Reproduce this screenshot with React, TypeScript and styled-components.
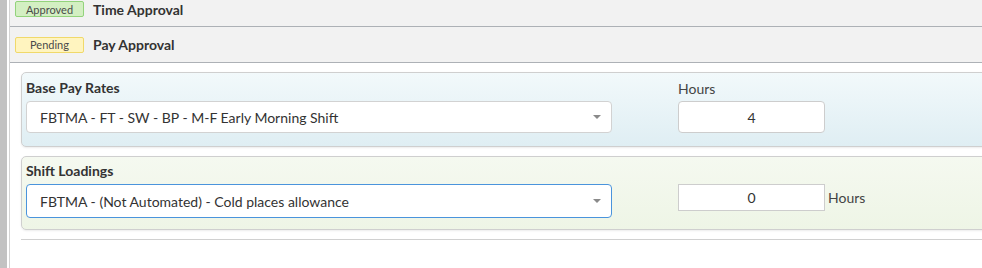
import React from "react";
import styled, { createGlobalStyle } from "styled-components";

const Global = createGlobalStyle`
  html, body {
    margin: 0;
    padding: 0;
    background: #fff;
    overflow: hidden;
  }
  body {
    font-family: Lato, "Open Sans", Arial, sans-serif;
    color: #333;
  }
`;

const Page = styled.div`
  display: flex;
  height: 268px;
  width: 982px;
  overflow: hidden;
`;

const SideStrip = styled.div`
  width: 7px;
  flex: none;
  background: #c2c2c2;
  margin-right: 2px;
`;

const Main = styled.div`
  flex: 1;
  border-left: 1px solid #d4d4d4;
  min-width: 0;
`;

const ApprovalRow = styled.div<{ $h: number; $pb?: number }>`
  display: flex;
  align-items: center;
  box-sizing: border-box;
  height: ${(p) => p.$h}px;
  padding-bottom: ${(p) => p.$pb ?? 0}px;
  background: #f2f2f2;
  border-bottom: 1px solid #adb1b6;
  padding-left: 5px;
  gap: 9px;
`;

const Badge = styled.span<{ $kind: "ok" | "wait" }>`
  display: inline-flex;
  align-items: center;
  justify-content: center;
  box-sizing: border-box;
  width: 69px;
  height: 16px;
  font-size: 11px;
  color: #4a4a4a;
  border-radius: 2px;
  background: ${(p) => (p.$kind === "ok" ? "#d3efc2" : "#fff4bf")};
  border: 1px solid ${(p) => (p.$kind === "ok" ? "#93d37c" : "#f0d96a")};
`;

const RowTitle = styled.span`
  font-size: 14px;
  font-weight: 700;
  color: #333;
`;

const Body = styled.div`
  padding: 9px 0 0 11px;
  margin-right: -12px;
`;

const Panel = styled.div<{ $tone: "blue" | "green"; $pt: number }>`
  box-sizing: border-box;
  border: 1px solid #cfcfcf;
  border-radius: 5px;
  box-shadow: 0 1px 2px rgba(0, 0, 0, 0.08);
  padding: ${(p) => p.$pt}px 5px 0 4px;
  margin-bottom: 9px;
  background: ${(p) =>
    p.$tone === "blue"
      ? "linear-gradient(#f2f9fb, #dfeef3)"
      : "linear-gradient(#f5f9f0, #eef5e6)"};
`;

const PanelGrid = styled.div<{ $h: number }>`
  display: grid;
  grid-template-columns: 586px 147px auto;
  column-gap: 66px;
  height: ${(p) => p.$h}px;
  align-content: start;
  align-items: start;
`;

const Label = styled.div`
  font-size: 14px;
  font-weight: 700;
  color: #333;
  height: 22px;
  line-height: 17px;
  padding-top: 1px;
`;

const HoursLabel = styled.div`
  font-size: 14px;
  color: #444;
  line-height: 17px;
  padding-top: 2px;
`;

const Select = styled.div<{ $focus?: boolean; $h: number }>`
  box-sizing: border-box;
  height: ${(p) => p.$h}px;
  background: #fff;
  border: 1px solid ${(p) => (p.$focus ? "#4a94dc" : "#d2d2d2")};
  border-radius: 4px;
  display: flex;
  align-items: center;
  padding: 0 10px 0 13px;
  font-size: 14px;
  color: #333;
`;

const SelectText = styled.span`
  flex: 1;
`;

const Caret = styled.span`
  width: 0;
  height: 0;
  border-left: 4px solid transparent;
  border-right: 4px solid transparent;
  border-top: 4px solid #8a8a8a;
`;

const NumberBox = styled.div<{ $h: number; $r: number }>`
  box-sizing: border-box;
  height: ${(p) => p.$h}px;
  background: #fff;
  border: 1px solid #cdcdcd;
  border-radius: ${(p) => p.$r}px;
  display: flex;
  align-items: center;
  justify-content: center;
  font-size: 14px;
  color: #333;
`;

const Suffix = styled.span`
  font-size: 14px;
  color: #444;
  line-height: 27px;
  margin-left: -63px;
`;

const Rule = styled.div`
  border-top: 1px solid #d0d0d0;
  margin-top: 1px;
`;

export default function App() {
  return (
    <>
      <Global />
      <Page>
        <SideStrip />
        <Main>
          <ApprovalRow $h={27} $pb={8}>
            <Badge $kind="ok">Approved</Badge>
            <RowTitle>Time Approval</RowTitle>
          </ApprovalRow>
          <ApprovalRow $h={36}>
            <Badge $kind="wait">Pending</Badge>
            <RowTitle>Pay Approval</RowTitle>
          </ApprovalRow>
          <Body>
            <Panel $tone="blue" $pt={5}>
              <PanelGrid $h={68}>
                <Label>Base Pay Rates</Label>
                <HoursLabel>Hours</HoursLabel>
                <div />
                <Select $h={32}>
                  <SelectText>FBTMA - FT - SW - BP - M-F Early Morning Shift</SelectText>
                  <Caret />
                </Select>
                <NumberBox $h={32} $r={4}>4</NumberBox>
                <div />
              </PanelGrid>
            </Panel>
            <Panel $tone="green" $pt={4}>
              <PanelGrid $h={68}>
                <Label>Shift Loadings</Label>
                <div />
                <div />
                <Select $h={34} $focus>
                  <SelectText>FBTMA - (Not Automated) - Cold places allowance</SelectText>
                  <Caret />
                </Select>
                <NumberBox $h={27} $r={0}>0</NumberBox>
                <Suffix>Hours</Suffix>
              </PanelGrid>
            </Panel>
            <Rule />
          </Body>
        </Main>
      </Page>
    </>
  );
}
